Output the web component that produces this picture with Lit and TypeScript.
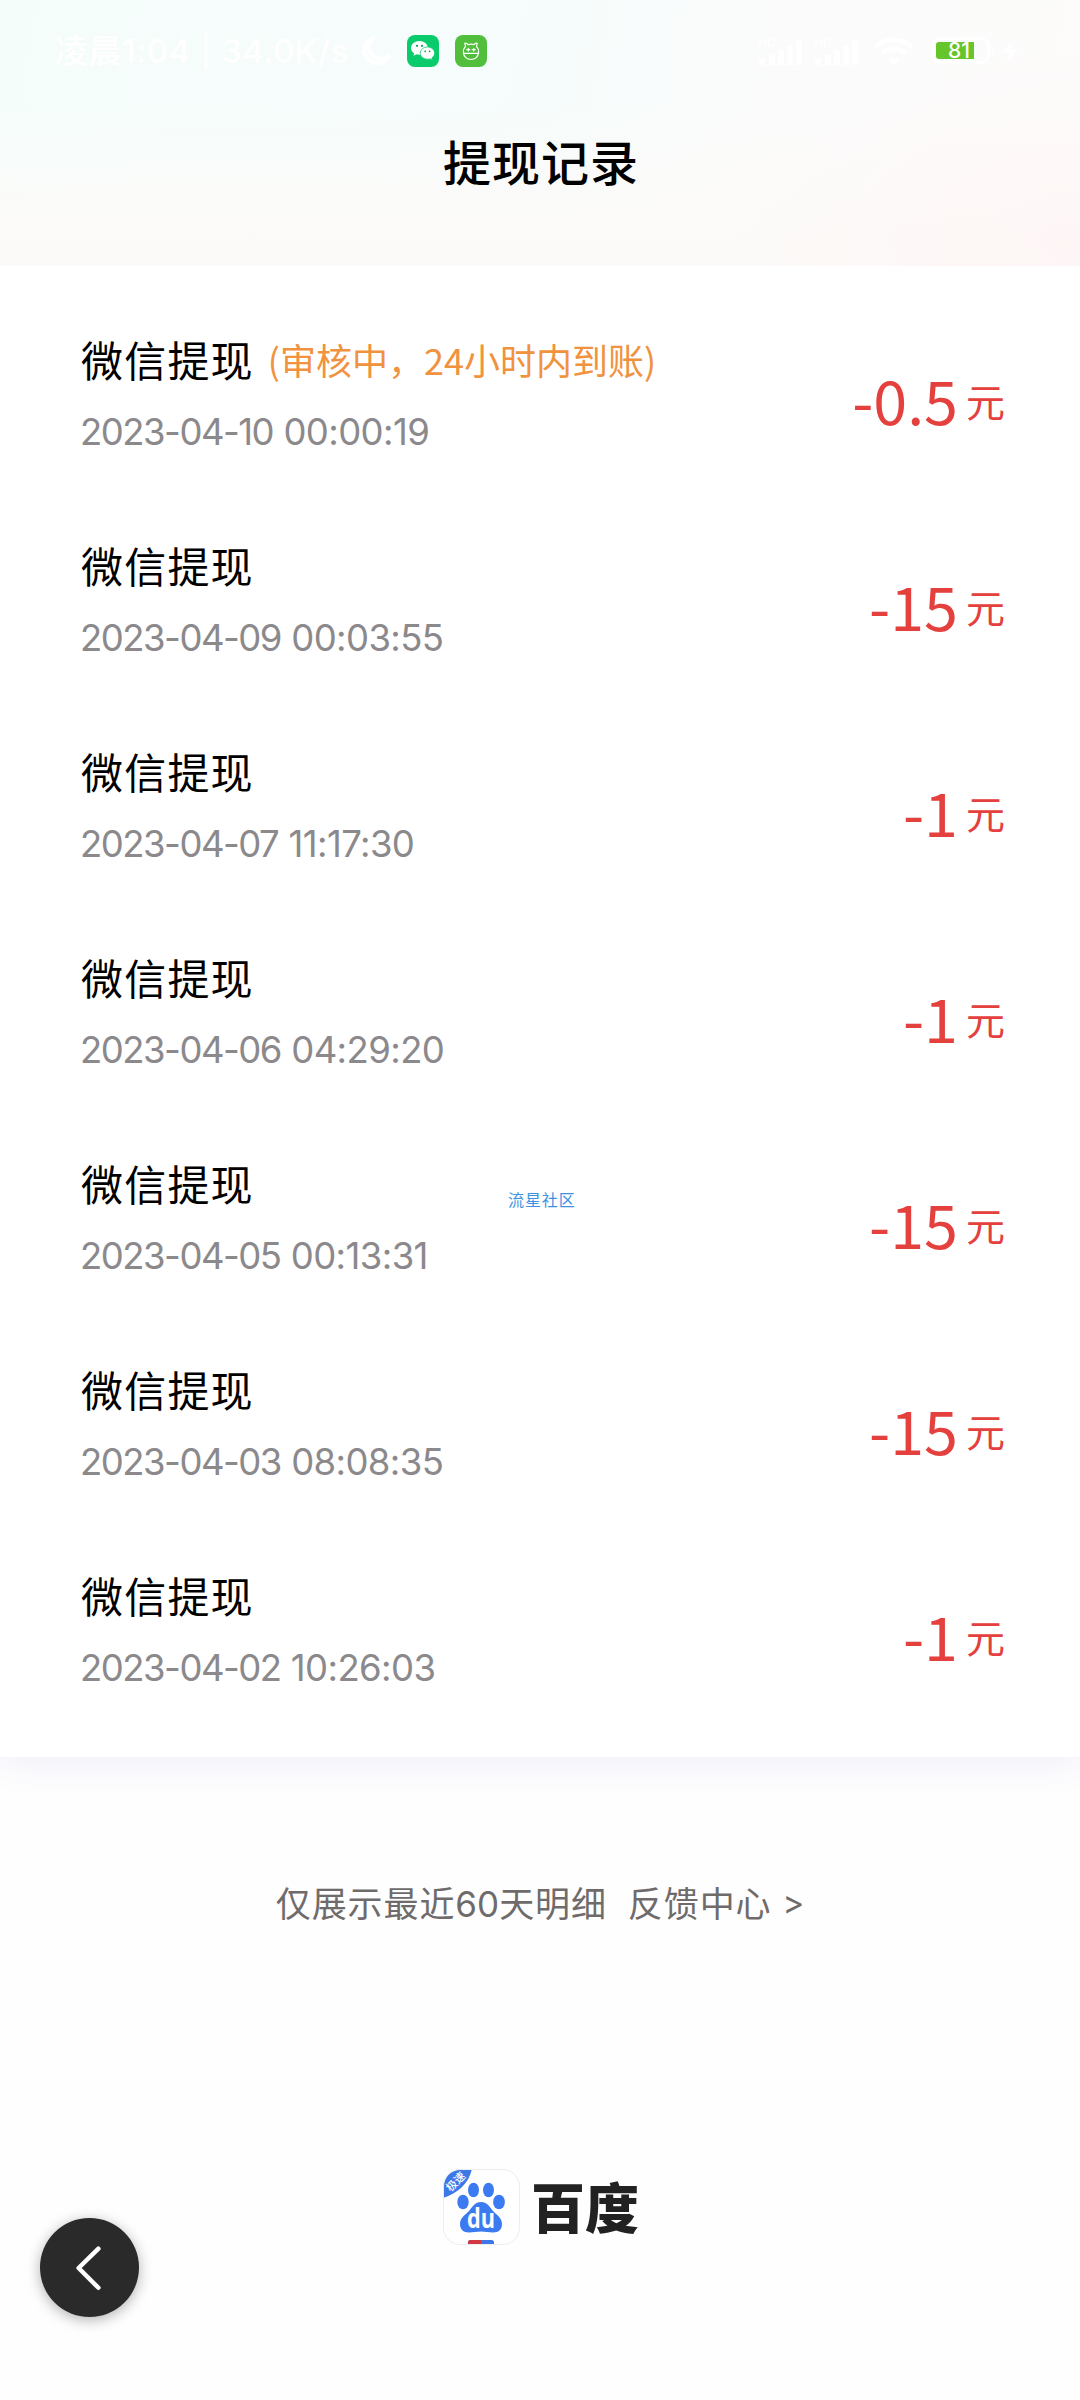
import { LitElement, html, css, svg, nothing } from "lit";
import { customElement, property } from "lit/decorators.js";

interface WithdrawalRecord {
  date: string;
  time: string;
  amount: string;
  note?: string;
}

const RECORDS: WithdrawalRecord[] = [
  { date: "2023-04-10", time: "00:00:19", amount: "-0.5", note: "(审核中，24小时内到账)" },
  { date: "2023-04-09", time: "00:03:55", amount: "-15" },
  { date: "2023-04-07", time: "11:17:30", amount: "-1" },
  { date: "2023-04-06", time: "04:29:20", amount: "-1" },
  { date: "2023-04-05", time: "00:13:31", amount: "-15" },
  { date: "2023-04-03", time: "08:08:35", amount: "-15" },
  { date: "2023-04-02", time: "10:26:03", amount: "-1" },
];

const signalBars = svg`
  <rect x="0" y="20" width="6" height="6" rx="1" />
  <rect x="10" y="16" width="6" height="10" rx="1" />
  <rect x="19" y="11" width="6" height="15" rx="1" />
  <rect x="28" y="6" width="6" height="20" rx="1" />
  <rect x="37" y="0" width="6" height="26" rx="1" />`;

@customElement("status-bar")
export class StatusBar extends LitElement {
  static styles = css`
    :host {
      display: flex;
      align-items: center;
      height: 102px;
      box-sizing: border-box;
      padding: 0 58px 0 55px;
      color: #fff;
      font: 500 33px/36px Inter, "Noto Sans CJK SC", sans-serif;
    }
    .clock { width: 304px; white-space: nowrap; letter-spacing: 0.500px; }
    svg { display: block; flex: none; }
    .moon { margin-right: 15px; }
    .app + .app { margin-left: 16px; }
    .right { display: flex; align-items: center; margin-left: auto; }
    .signal { display: flex; margin-right: 10px; }
    .hd { font: 600 12px/12px Inter, sans-serif; fill: #fff; }
    .wifi { margin: 0 16px 0 4px; }
    .level { font: 500 21px/20px Inter, sans-serif; fill: #fff; }
  `;

  render() {
    return html`
      <span class="clock">凌晨1:04 | 34.0K/s</span>
      <svg class="moon" width="33" height="32" viewBox="0 0 33 32" fill="none" stroke="#fff" stroke-width="4" stroke-linejoin="round">
        <path d="M14 3 A13 13 0 1 0 30 21 A12 12 0 0 1 14 3Z" />
      </svg>
      <svg class="app" width="32" height="32" viewBox="0 0 32 32">
        <rect width="32" height="32" rx="8" fill="#0acb6b" />
        <path fill="#fff" d="M12.4 6C7.8 6 4 9 4 12.9c0 2.200 1.200 4.100 3.100 5.400l-.6 2.500 3-1.500c.9.2 1.900.4 2.900.4 4.600 0 8.400-3 8.400-6.800S17 6 12.400 6Z" />
        <path fill="#fff" stroke="#0acb6b" stroke-width=".8" d="M20.400 12c-4 0-7.200 2.700-7.200 6.100s3.200 6.100 7.200 6.100c.9 0 1.700-.1 2.500-.3l2.400 1.300-.5-2.200c1.700-1.100 2.800-2.900 2.800-4.900 0-3.400-3.200-6.100-7.200-6.100Z" />
        <g fill="#0a9d55">
          <circle cx="10" cy="10.800" r="1.100" /><circle cx="15" cy="10.800" r="1.100" />
          <circle cx="18.200" cy="16.300" r=".9" /><circle cx="22.600" cy="16.300" r=".9" />
        </g>
      </svg>
      <svg class="app" width="32" height="32" viewBox="0 0 32 32">
        <rect width="32" height="32" rx="8" fill="#51bf3b" />
        <g fill="none" stroke="#fff" stroke-width="1.200" stroke-linecap="round" stroke-linejoin="round">
          <path d="M10.500 11.500 9.800 8.200Q11.500 7.500 13 9.600Q16 8.800 19 9.600Q20.500 7.500 22.200 8.200L21.500 11.500Q24 14 23.600 17.500C23.300 21.800 20 24.500 16 24.500S8.700 21.800 8.400 17.500Q8 14 10.500 11.500Z" />
          <path d="M8.500 18.300H23.500M11.800 14.700h3M13.300 13.400v2.600M17.200 14.700h3M18.700 13.400v2.600" />
        </g>
      </svg>
      <div class="right">
        ${[0, 1].map(
          () => html`<svg class="signal" width="46" height="34" viewBox="0 0 46 34">
            <text class="hd" x="0" y="13">HD</text>
            <g fill="#fff" transform="translate(1 5)">${signalBars}</g>
          </svg>`
        )}
        <svg class="wifi" width="40" height="32" viewBox="0 0 40 32" fill="none" stroke="#fff" stroke-width="4.500">
          <path d="M2 12a26 26 0 0 1 36 0M8.500 18.500a17 17 0 0 1 23 0" />
          <path d="M20 31l-6-6a9 9 0 0 1 12 0Z" fill="#fff" stroke="none" />
        </svg>
        <svg width="92" height="32" viewBox="0 0 92 32">
          <rect x="2.500" y="3.500" width="56" height="24" rx="7" fill="none" stroke="#fff" stroke-width="2.500" />
          <path d="M62 12q4 3.500 0 8Z" fill="#fff" />
          <path d="M9 7H44V24H9Q6 24 6 21V10Q6 7 9 7Z" fill="#66c52b" />
          <text class="level" x="18" y="23">81</text>
          <path d="M83 5 72 18h7l-3 10 12-14h-7Z" fill="#fff" />
        </svg>
      </div>
    `;
  }
}

@customElement("record-row")
export class RecordRow extends LitElement {
  @property({ attribute: false }) record!: WithdrawalRecord;

  static styles = css`
    :host {
      display: flex;
      align-items: center;
      justify-content: space-between;
      height: 206px;
      box-sizing: border-box;
      padding: 0 75px 0 81px;
    }
    .title { display: flex; align-items: center; height: 62px; font-size: 42px; line-height: 62px; letter-spacing: 1.200px; color: #000; }
    .note { margin-left: 14px; font-size: 36px; letter-spacing: 0; color: #f0923e; }
    .stamp { margin: 17px 0 0 -1px; height: 48px; font: 400 36.500px/50px Inter, sans-serif; letter-spacing: -1.500px; word-spacing: 1.500px; color: #8b898c; }
    .time { letter-spacing: -0.600px; }
    .amount { display: flex; align-items: center; padding-top: 15px; color: #e4403e; line-height: 80px; }
    .value { font-size: 61px; margin-right: 8px; }
    .unit { padding-top: 2px; font-size: 39px; }
  `;

  render() {
    const { date, time, amount, note } = this.record;
    return html`
      <div>
        <div class="title">
          <span>微信提现</span>
          ${note ? html`<span class="note">${note}</span>` : nothing}
        </div>
        <div class="stamp">${date} <span class="time">${time}</span></div>
      </div>
      <div class="amount"><span class="value">${amount}</span><span class="unit">元</span></div>
    `;
  }
}

@customElement("app-root")
export class AppRoot extends LitElement {
  static styles = css`
    :host {
      display: flex;
      flex-direction: column;
      position: relative;
      width: 1080px;
      height: 2400px;
      overflow: hidden;
      background: #fefefe;
      font-family: "Noto Sans CJK SC", sans-serif;
    }
    .header {
      flex: none;
      height: 266px;
      background:
        radial-gradient(ellipse 330px 190px at 1080px 240px, rgba(255, 243, 244, 0.6), rgba(255, 246, 246, 0)),
        linear-gradient(to bottom, rgba(252, 250, 248, 0) 40%, #fcfaf8 90%),
        linear-gradient(100deg, #f5fdfb 0%, #f6fcfb 50%, #fbfbfb 70%, #fdfcfb 100%);
    }
    .heading {
      margin: 0;
      padding: 24px 0 0 2px;
      text-align: center;
      font-size: 48px;
      line-height: 68px;
      font-weight: 500;
      letter-spacing: 1px;
      color: #000;
    }
    .list {
      flex: none;
      padding: 22px 0 27px;
      background: #fff;
      box-shadow: 0 8px 32px rgba(80, 70, 190, 0.08);
      clip-path: inset(0 0 -60px 0);
    }
    .hint {
      display: flex;
      justify-content: center;
      margin: 119px 0 0 1px;
      font-size: 35px;
      line-height: 52px;
      letter-spacing: 0.900px;
      color: #6f6b6b;
    }
    .days { font-family: Inter, sans-serif; font-size: 35px; letter-spacing: 0; }
    .link { margin-left: 21px; }
    .chevron { margin-left: 11px; font-family: Inter, sans-serif; font-size: 33px; }
    .brand { display: flex; align-items: center; justify-content: center; margin: 239px 0 0 2px; height: 76px; }
    .logo { overflow: visible; }
    .wordmark { margin: -3px 0 0 11px; font-size: 54px; line-height: 76px; font-weight: 900; color: #222; }
    .corner { font: 500 11px "Noto Sans CJK SC", sans-serif; fill: #fff; }
    .du { font: 700 26px "Open Sans", sans-serif; fill: #fff; }
    .watermark { position: absolute; left: 508px; top: 1187px; font-size: 16px; line-height: 24px; letter-spacing: 0.900px; color: #3d93e2; }
    .back {
      position: absolute;
      left: 40px;
      top: 2218px;
      width: 99px;
      height: 99px;
      padding: 0;
      border: 0;
      border-radius: 50%;
      background: #2a2a2a;
      box-shadow: 0 3px 14px rgba(0, 0, 0, 0.3);
    }
    .back svg { display: block; }
  `;

  render() {
    return html`
      <header class="header">
        <status-bar></status-bar>
        <h1 class="heading">提现记录</h1>
      </header>
      <main class="list">
        ${RECORDS.map((record) => html`<record-row .record=${record}></record-row>`)}
      </main>
      <div class="hint">
        <span>仅展示最近<span class="days">60</span>天明细</span>
        <span class="link">反馈中心</span>
        <span class="chevron">&gt;</span>
      </div>
      <div class="brand">
        <svg class="logo" width="77" height="76" viewBox="0 0 77 76">
          <defs><clipPath id="tile"><rect x=".5" y=".5" width="76" height="75" rx="17" /></clipPath></defs>
          <g clip-path="url(#tile)">
            <rect width="77" height="76" fill="#fff" />
            <path d="M0 0H29Q24 21 0 29Z" fill="#3d78e6" />
            <rect x="25" y="71" width="26" height="8" rx="2.500" fill="#3d78e6" />
            <path d="M38 71H27.500Q25 71 25 73.500V79H38Z" fill="#d23a43" />
          </g>
          <rect x=".5" y=".5" width="76" height="75" rx="17" fill="none" stroke="#ededed" />
          <g fill="#3b7af0">
            <ellipse cx="20" cy="33" rx="5.700" ry="7.300" />
            <ellipse cx="30.500" cy="21" rx="5.500" ry="7.300" />
            <ellipse cx="45.500" cy="21" rx="5.500" ry="7.300" />
            <ellipse cx="56" cy="33" rx="5.900" ry="7.300" />
            <path d="M38 33C44 33 47 38 50 42C54 46 59 49 59 55C59 60 56 63.500 50 63.500C46 63.500 42 62.500 38 62.500S30 63.500 26 63.500C20 63.500 17 60 17 55C17 49 22 46 26 42C29 38 32 33 38 33Z" />
          </g>
          <text class="du" x="38" y="59" text-anchor="middle" textLength="28" lengthAdjust="spacingAndGlyphs">du</text>
          <text class="corner" transform="translate(13 13) rotate(-45)" x="0" y="3.500" text-anchor="middle">极速</text>
        </svg>
        <span class="wordmark">百度</span>
      </div>
      <span class="watermark">流星社区</span>
      <button class="back" aria-label="返回">
        <svg width="99" height="99" viewBox="0 0 100 100" fill="none" stroke="#fff" stroke-width="4.500" stroke-linecap="round" stroke-linejoin="round">
          <path d="M59 31 39 50.500 59 70.500" />
        </svg>
      </button>
    `;
  }
}
